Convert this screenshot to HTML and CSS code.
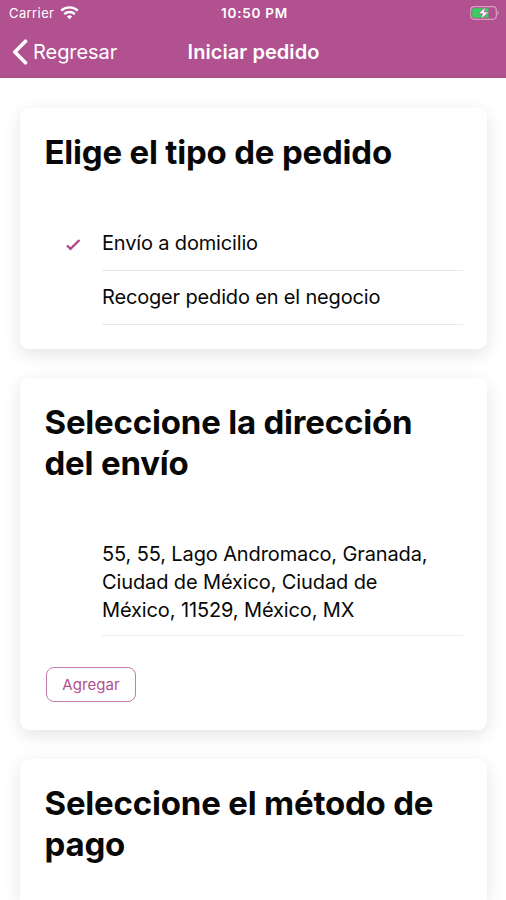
FILE: index.html
```html
<!DOCTYPE html>
<html lang="es">
<head>
<meta charset="utf-8">
<title>Iniciar pedido</title>
<link rel="stylesheet" href="styles.css">
</head>
<body>
<header class="top">
  <div class="status">
    <div class="carrier"><span>Carrier</span>
      <svg width="19" height="14" viewBox="0 0 19 14" fill="none" stroke="#fff" stroke-width="2.4"><path d="M1.200 4.700a12 12 0 0 1 16.600 0M4.200 8.100a7.600 7.600 0 0 1 10.600 0"/><path d="M9.500 13.300 6.900 10.600a3.700 3.700 0 0 1 5.200 0z" fill="#fff" stroke="none"/></svg>
    </div>
    <time class="clock">10:50 PM</time>
    <svg class="battery" width="30" height="14" viewBox="0 0 30 14"><rect x=".7" y=".7" width="25.600" height="12.600" rx="3.500" fill="none" stroke="#d39fc2" stroke-width="1.200"/><path d="M4 2.300h14.500v9.400H4a1.700 1.700 0 0 1-1.700-1.700V4A1.700 1.700 0 0 1 4 2.300z" fill="#35d05a"/><path d="M27.500 4.500q2.500 2.500 0 5z" fill="#d39fc2"/><path d="M16 .800 8.200 7.700h4.400l-1.800 5.500 8-7.200h-4.600z" fill="#fff" stroke="#b15190" stroke-width=".7"/></svg>
  </div>
  <nav class="nav">
    <a class="back"><svg width="16" height="26" viewBox="0 0 16 26" fill="none" stroke="#fff" stroke-width="3.600" stroke-linecap="round" stroke-linejoin="round"><path d="M13.500 2.200 2.800 13l10.700 10.800"/></svg><span>Regresar</span></a>
    <h1>Iniciar pedido</h1>
    <span></span>
  </nav>
</header>
<main>
  <section class="card type">
    <h2>Elige el tipo de pedido</h2>
    <ul>
      <li><svg class="check" width="16" height="13" viewBox="0 0 16 13" fill="none" stroke="#b0458c" stroke-width="2.300"><path d="m2 7.500 3.500 3.300L14.500 2"/></svg>Envío a domicilio</li>
      <li>Recoger pedido en el negocio</li>
    </ul>
  </section>
  <section class="card address">
    <h2>Seleccione la dirección<br>del envío</h2>
    <p>55, 55, Lago Andromaco, Granada,<br>Ciudad de México, Ciudad de<br>México, 11529, México, MX</p>
    <button>Agregar</button>
  </section>
  <section class="card payment">
    <h2>Seleccione el método de<br>pago</h2>
  </section>
</main>
</body>
</html>
```
FILE: styles.css
```css
* { box-sizing: border-box; }
body { margin: 0; height: 900px; overflow: hidden; background: #fff; color: #080808; font-family: Inter, "Liberation Sans", sans-serif; }
.top { height: 78px; background: #b15190; color: #fff; border-bottom: 1px solid #a94b88; }
.status { height: 26px; display: grid; grid-template-columns: 1fr auto 1fr; align-items: center; padding: 0 6px 0 9px; font-size: 13px; }
.carrier { display: flex; align-items: center; gap: 6px; letter-spacing: .4px; }
.clock { font-size: 13.5px; font-weight: 600; letter-spacing: .75px; }
.battery { justify-self: end; }
.nav { height: 51px; display: grid; grid-template-columns: 1fr auto 1fr; align-items: center; padding: 0 11px 0 12px; }
.back { display: flex; align-items: center; gap: 5px; font-size: 20px; letter-spacing: -.05px; }
h1 { margin: 0; font-size: 20px; font-weight: 600; letter-spacing: .06px; }
main { height: 822px; padding: 30px 19px 0 20px; display: flex; flex-direction: column; gap: 29px; }
.card { border-radius: 9px; background: #fff; box-shadow: 0 5px 18px rgba(0,0,0,.11); padding: 24px 24px 0 25px; flex-shrink: 0; }
.type { height: 241px; }
.address { height: 352px; }
.payment { height: 141px; border-radius: 9px 9px 0 0; }
h2 { margin: 0 0 0 -.5px; font-size: 33px; line-height: 41px; font-weight: 660; letter-spacing: -.2px; white-space: nowrap; }
ul { list-style: none; padding: 0; margin: 44px 0 0 57px; }
li { height: 54px; border-bottom: 1px solid #e8e8e8; font-size: 20px; line-height: 53px; letter-spacing: -.16px; position: relative; }
.check { position: absolute; left: -37px; top: 21px; }
p { margin: 55px 0 0 57px; height: 97px; padding-top: 1px; border-bottom: 1px solid #ececec; font-size: 20px; line-height: 28px; letter-spacing: -.12px; white-space: nowrap; }
button { display: block; margin: 31px 0 0 1px; width: 90px; height: 35px; padding: 0; border: 1px solid #c67baa; border-radius: 8px; background: #fff; color: #b15190; font: 15px Inter, sans-serif; letter-spacing: .05px; }
```
